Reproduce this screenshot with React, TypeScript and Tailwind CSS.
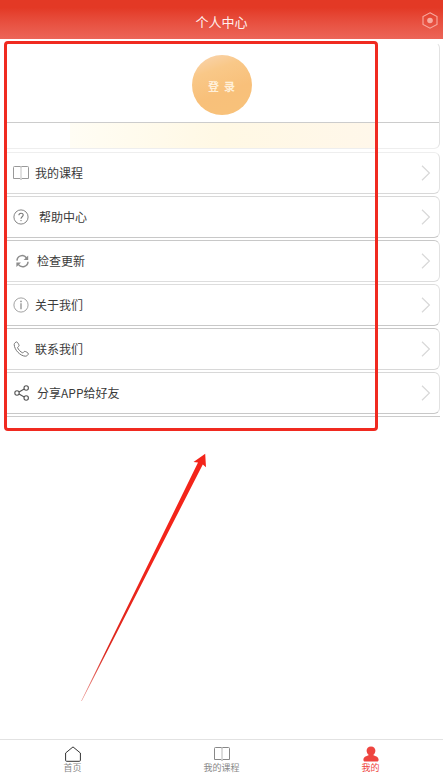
import type { ReactNode } from 'react';

function BookIcon({ className = '' }: { className?: string }) {
  return (
    <svg viewBox="0 0 16 16" fill="none" stroke="currentColor" className={className}>
      <path d="M8 2.2 L7.2 1.5 H1.4 Q0.5 1.5 0.5 2.4 V13.5 H7 L8 14.5 L9 13.5 H15.5 V2.4 Q15.5 1.5 14.6 1.5 H8.8 Z" />
      <path d="M8 2.2 V14" strokeOpacity="0.6" />
    </svg>
  );
}

function HelpIcon() {
  return (
    <svg viewBox="0 0 16 16" fill="none" stroke="currentColor" className="w-4 h-4 text-[#777]">
      <circle cx="8" cy="8" r="7.1" strokeWidth="0.9" />
      <path d="M5.9 6.3 C5.9 3.5 10.2 3.6 10.2 6.1 C10.2 7.7 8 7.8 8 9.7" strokeWidth="1.1" />
      <circle cx="8" cy="11.6" r="0.7" fill="currentColor" stroke="none" />
    </svg>
  );
}

function RefreshIcon() {
  return (
    <svg viewBox="0 0 16 16" fill="none" stroke="currentColor" strokeWidth="1.5" className="w-4 h-4 text-[#8c8c8c]">
      <path d="M4 7.6 C4.2 2.6 10.4 0.8 13.6 5" />
      <path d="M15.2 2.4 V7 H10.6 Z" fill="currentColor" stroke="none" />
      <path d="M15 8.8 C14.8 13.6 8.6 15.6 5.2 11.4" />
      <path d="M3.4 14 V9.4 H8 Z" fill="currentColor" stroke="none" />
    </svg>
  );
}

function InfoIcon() {
  return (
    <svg viewBox="0 0 16 16" fill="none" stroke="currentColor" className="w-4 h-4 text-[#999]">
      <circle cx="8" cy="8" r="7.1" strokeWidth="0.9" />
      <circle cx="8" cy="4.4" r="0.9" fill="currentColor" stroke="none" />
      <path d="M8 6.3 V12.2" strokeWidth="1.4" />
    </svg>
  );
}

function PhoneIcon() {
  return (
    <svg viewBox="0 0 16 16" fill="none" stroke="currentColor" strokeLinejoin="round" className="w-4 h-4 text-[#666]">
      <path d="M3.7 0.9 C2.6 1.1 1.2 2.2 1.2 3.6 C1.5 9 7.2 14.9 12.3 15.2 C13.8 15.2 15 14.1 15.4 12.9 C15.4 11.8 12.4 10.2 11.6 10.4 C10.7 10.7 10.4 12 9.6 11.8 C7.8 11.2 5.1 8.3 4.6 6.7 C4.5 5.9 6 5.6 6.1 4.7 C6.1 3.9 4.6 1 3.7 0.9 Z" strokeWidth="0.9" />
    </svg>
  );
}

function ShareIcon() {
  return (
    <svg viewBox="0 0 16 16" fill="none" stroke="currentColor" strokeWidth="1.1" className="w-4 h-4 text-[#555]">
      <circle cx="4" cy="8" r="2.2" />
      <circle cx="13.2" cy="3" r="2.2" />
      <circle cx="13.2" cy="13" r="2.2" />
      <path d="M6 7 L11.2 4 M6 9 L11.2 12" />
    </svg>
  );
}

function HomeIcon() {
  return (
    <svg viewBox="0 0 16 16" fill="none" stroke="currentColor" strokeLinejoin="round" className="w-4 h-4 text-[#333]">
      <path d="M8 0.9 L0.6 7 V14.3 Q0.6 15.3 1.6 15.3 H14.4 Q15.4 15.3 15.4 14.3 V7 Z" />
    </svg>
  );
}

function UserIcon() {
  return (
    <svg viewBox="0 0 16 16" fill="currentColor" className="w-4 h-4">
      <path d="M8 0.4 C10.8 0.4 12.5 2.4 12.4 4.8 C12.3 6.6 11.4 8.1 10.2 9 C10.6 9.8 15.5 10.1 15.6 13.6 C15.6 15 15.1 15.6 14 15.6 H2 C0.9 15.6 0.4 15 0.4 13.6 C0.5 10.1 5.4 9.8 5.8 9 C4.6 8.1 3.7 6.6 3.6 4.8 C3.5 2.4 5.2 0.4 8 0.4 Z" />
    </svg>
  );
}

interface MenuItem {
  label: string;
  icon: ReactNode;
  spacing: string;
  border: string;
}

const menuItems: MenuItem[] = [
  { label: '我的课程', icon: <BookIcon className="w-4 h-4 text-[#999]" />, spacing: 'gap-1.5', border: 'border-t-[#eee] border-b-[#d8d8d8]' },
  { label: '帮助中心', icon: <HelpIcon />, spacing: 'gap-2.5', border: 'border-t-[#d8d8d8] border-b-[#c8c8c8]' },
  { label: '检查更新', icon: <RefreshIcon />, spacing: 'gap-2', border: 'border-t-[#c8c8c8] border-b-[#ddd]' },
  { label: '关于我们', icon: <InfoIcon />, spacing: 'gap-1.5', border: 'border-t-[#ddd] border-b-[#c8c8c8]' },
  { label: '联系我们', icon: <PhoneIcon />, spacing: 'gap-1.5', border: 'border-t-[#c8c8c8] border-b-[#d8d8d8]' },
  { label: '分享APP给好友', icon: <ShareIcon />, spacing: 'gap-2', border: 'border-t-[#d8d8d8] border-b-[#c8c8c8]' },
];

const tabs = [
  { label: '首页', icon: <HomeIcon />, color: 'text-[#888]' },
  { label: '我的课程', icon: <BookIcon className="w-4 h-4" />, color: 'text-[#888]' },
  { label: '我的', icon: <UserIcon />, color: 'text-[#ee4540]' },
];

export default function App() {
  return (
    <div className="relative flex min-h-screen flex-col overflow-hidden bg-white font-['Noto_Sans_CJK_SC',sans-serif]">
      <header className="relative flex h-[39px] items-center justify-center bg-gradient-to-b from-[#e33925] from-20% to-[#ec6558] pt-1">
        <h1 className="text-[13px] leading-5 text-[#fff0ee]">个人中心</h1>
        <button type="button" aria-label="设置" className="absolute right-1 top-3">
          <svg viewBox="0 0 18 18" fill="none" stroke="#f8aaa0" className="h-[18px] w-[18px]">
            <path d="M9 0.8 L16 4.6 V12.4 L9 16.2 L2 12.4 V4.6 Z" strokeWidth="1.1" />
            <circle cx="9" cy="8.5" r="2.8" fill="#f8aaa0" stroke="none" />
          </svg>
        </button>
      </header>

      <main className="flex-1 pt-[3px] pr-[3px] pl-1.5">
        <section className="rounded-r-md border border-l-0 border-[#e2e2e2] border-t-white border-b-[#eee]">
          <div className="flex h-20 items-center justify-center border-b border-[#ccc] pt-1 pr-0.5">
            <button
              type="button"
              className="h-15 w-15 rounded-full bg-[linear-gradient(160deg,#f9d6b4_0%,#f9c888_28%,#f8c07a_60%,#f8c27a_100%)] pt-0.5 text-[11px] leading-4 font-bold whitespace-pre text-[#fff0da]"
            >
              {'登  录'}
            </button>
          </div>
          <div className="mx-16 h-[25px] bg-gradient-to-r from-[#fffdf4] via-[#fff8e4] to-[#fff7ea]"></div>
        </section>

        <ul className="mt-[3px] flex flex-col gap-0.5 border-b border-[#ccc] pb-0.5">
          {menuItems.map((item) => (
            <li key={item.label}>
              <button
                type="button"
                className={`flex h-[42px] w-full items-center rounded-r-md border border-l-0 border-r-[#e2e2e2] pr-2 pl-[7px] text-[#3a3a3a] ${item.spacing} ${item.border}`}
              >
                {item.icon}
                <span className="text-[12px] leading-4">{item.label}</span>
                <svg viewBox="0 0 10 16" fill="none" stroke="#d8d8d8" strokeWidth="1.2" className="ml-auto h-4 w-2.5">
                  <path d="M1 0.8 L8.4 8 L1 15.2" />
                </svg>
              </button>
            </li>
          ))}
        </ul>
      </main>

      <nav className="-mx-0.5 grid h-[39px] grid-cols-3 border-t border-[#e2e2e2]">
        {tabs.map((tab) => (
          <a key={tab.label} href="#" className={`flex flex-col items-center pt-1.5 ${tab.color}`}>
            {tab.icon}
            <span className="text-[9px] leading-3">{tab.label}</span>
          </a>
        ))}
      </nav>

      {/* Highlight frame and pointer */}
      <div className="pointer-events-none absolute top-[41px] left-1 h-[390px] w-[374px] rounded-sm border-3 border-[#f02a20]"></div>
      <svg viewBox="0 0 130 252" className="pointer-events-none absolute top-[452px] left-20 h-[252px] w-[130px]">
        <defs>
          <linearGradient id="pointer" gradientUnits="userSpaceOnUse" x1="2" y1="249" x2="125" y2="2">
            <stop offset="0" stopColor="#d8281e" stopOpacity="0.5" />
            <stop offset="0.2" stopColor="#dc281e" />
            <stop offset="0.6" stopColor="#f3241a" />
          </linearGradient>
        </defs>
        <path d="M125.2 1.8 L113.5 10 L118 10.6 L1.2 249 L1.8 249 L122.8 12.6 L126 15.2 Z" fill="url(#pointer)" />
      </svg>
    </div>
  );
}
